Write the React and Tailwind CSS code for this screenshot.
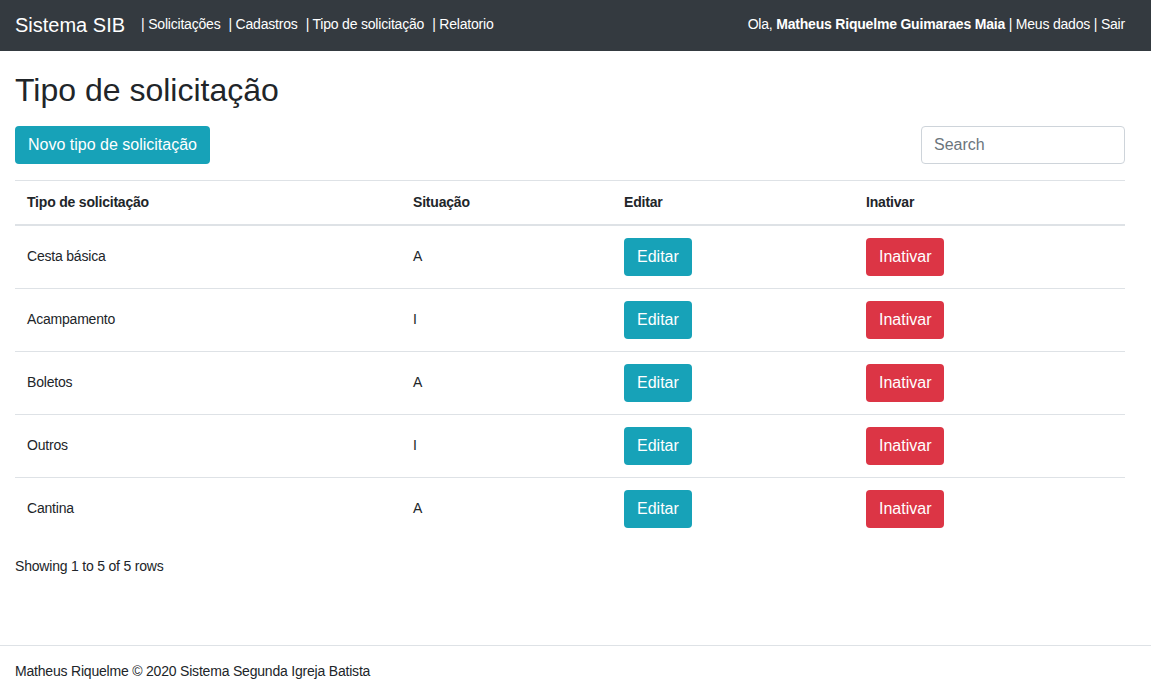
import React from "react";

const rows = [
  ["Cesta básica", "A"],
  ["Acampamento", "I"],
  ["Boletos", "A"],
  ["Outros", "I"],
  ["Cantina", "A"],
];

export default function App() {
  return (
    <div className="min-h-[692px] bg-white text-[#212529] flex flex-col" style={{ fontFamily: '"Liberation Sans", Arial, sans-serif' }}>
      <nav className="h-[51px] bg-[#343a40] text-white flex items-center px-[15px] pr-[26px] pb-[2px]">
        <span className="text-[20px] leading-none mr-4">Sistema SIB</span>
        <div className="flex gap-2 text-[14px] tracking-[-0.2px]">
          <span>| Solicitações</span>
          <span>| Cadastros</span>
          <span>| Tipo de solicitação</span>
          <span>| Relatorio</span>
        </div>
        <div className="ml-auto text-[14px] tracking-[-0.2px]">
          Ola, <b>Matheus Riquelme Guimaraes Maia</b> | Meus dados | Sair
        </div>
      </nav>

      <main className="ml-[15px] w-[1110px] pt-5 flex-1">
        <h2 className="text-[32px] leading-[38px] mb-[17px]">Tipo de solicitação</h2>
        <div className="flex justify-between items-center">
          <button className="h-[38px] px-[13px] rounded bg-[#17a2b8] text-white text-[16px]">Novo tipo de solicitação</button>
          <input
            placeholder="Search"
            className="w-[204px] h-[38px] px-3 border border-[#ced4da] rounded text-[16px] placeholder:text-[#6c757d] outline-none"
          />
        </div>
        <table className="w-full mt-4 table-fixed border-collapse text-[14px] tracking-[-0.2px]">
          <colgroup>
            <col className="w-[386px]" />
            <col className="w-[211px]" />
            <col className="w-[242px]" />
            <col className="w-[271px]" />
          </colgroup>
          <thead>
            <tr className="border-t border-[#dee2e6] border-b-2 h-[44px]">
              <th className="text-left font-bold px-3">Tipo de solicitação</th>
              <th className="text-left font-bold px-3">Situação</th>
              <th className="text-left font-bold px-3">Editar</th>
              <th className="text-left font-bold px-3">Inativar</th>
            </tr>
          </thead>
          <tbody>
            {rows.map(([name, s], i) => (
              <tr key={name} className={i < rows.length - 1 ? "border-b border-[#dee2e6]" : ""}>
                <td className="px-3 py-3">{name}</td>
                <td className="px-3 py-3">{s}</td>
                <td className="px-3 py-3">
                  <button className="h-[38px] px-[13px] rounded bg-[#17a2b8] text-white text-[16px] tracking-normal">Editar</button>
                </td>
                <td className="px-3 py-3">
                  <button className="h-[38px] px-[13px] rounded bg-[#dc3545] text-white text-[16px] tracking-normal">Inativar</button>
                </td>
              </tr>
            ))}
          </tbody>
        </table>
        <div className="mt-4 text-[14px] leading-5 tracking-[-0.2px]">Showing 1 to 5 of 5 rows</div>
      </main>

      <footer className="mt-auto border-t border-[#dee2e6] h-[47px] pt-[15px] px-[15px] text-[14px] leading-5 tracking-[-0.2px]">
        Matheus Riquelme © 2020 Sistema Segunda Igreja Batista
      </footer>
    </div>
  );
}
